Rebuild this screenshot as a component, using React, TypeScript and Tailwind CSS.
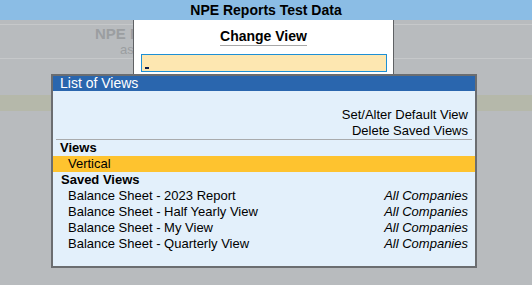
import React from "react";

const savedViews = [
  "Balance Sheet - 2023 Report",
  "Balance Sheet - Half Yearly View",
  "Balance Sheet - My View",
  "Balance Sheet - Quarterly View",
];

const App = () => {
  return (
    <div className="relative w-[532px] h-[285px] overflow-hidden bg-[#b8bbbe] font-['Liberation_Sans',Arial,sans-serif] text-[13px] text-black">
      {/* title bar */}
      <div className="h-5 bg-[#8bbde5] flex items-center justify-center font-bold text-[14px]">
        NPE Reports Test Data
      </div>

      {/* report behind the popups */}
      <div className="h-[5px] border-b border-[#c6c8ca]" />
      <div className="h-[34px] border-b border-[#c6c8ca]">
        <div className="w-[133px] h-full overflow-hidden whitespace-nowrap flex flex-col pl-[95px] pt-[1px] text-[#9b9ea1] leading-[16px]">
          <span className="font-bold text-[15px]">NPE Reports Test Data</span>
          <span className="pl-[25px] text-[13px]">as at 31-Mar-2024</span>
        </div>
      </div>
      <div className="h-[36px]" />
      <div className="h-4 bg-[#b5b8aa]" />

      {/* change view dialog */}
      <div className="absolute left-[133px] top-5 w-[261px] h-[60px] bg-white border-x border-[#5f6164] flex flex-col items-center">
        <div className="mt-[9px] font-bold text-[14px] leading-[14px] pb-[2px] border-b border-[#a8a8a8]">
          Change View
        </div>
        <div className="mt-[8px] w-[246px] h-[18px] border border-[#1e8fd5] bg-[#fde7b1] relative">
          <div className="absolute left-[3px] top-[12px] w-[4px] h-[2px] bg-[#0b1d4d]" />
        </div>
      </div>

      {/* list of views */}
      <div className="absolute left-[51px] top-[74px] w-[426px] h-[194px] border-2 border-[#6b6d70] bg-[#e3f0fb] flex flex-col leading-[16px]">
        <div className="h-[15px] bg-[#2a66ae] text-white text-[14px] leading-[15px] pl-[7px]">List of Views</div>
        <div className="h-4" />
        <div className="text-right pr-[7px]">Set/Alter Default View</div>
        <div className="text-right pr-[7px]">Delete Saved Views</div>
        <div className="mx-[3px] border-t border-[#a9abad]" />
        <div className="pl-[7px] font-bold">Views</div>
        <div className="bg-[#fec32f] pl-[15px]">Vertical</div>
        <div className="pl-[8px] font-bold">Saved Views</div>
        {savedViews.map((v) => (
          <div key={v} className="flex justify-between pl-[15px] pr-[7px]">
            <span>{v}</span>
            <span className="italic">All Companies</span>
          </div>
        ))}
      </div>
    </div>
  );
};

export default App;
